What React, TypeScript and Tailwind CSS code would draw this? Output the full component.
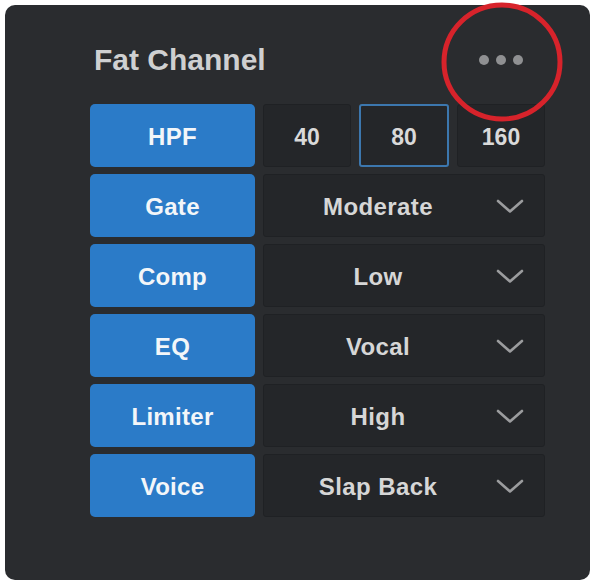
import React from 'react';

const rows = [
  { label: 'Gate', value: 'Moderate' },
  { label: 'Comp', value: 'Low' },
  { label: 'EQ', value: 'Vocal' },
  { label: 'Limiter', value: 'High' },
  { label: 'Voice', value: 'Slap Back' }
];

const hpfOptions = ['40', '80', '160'];

const Chevron = () => (
  <svg width="28" height="15" viewBox="0 0 28 15" fill="none">
    <path d="M2 2 L14 12.5 L26 2" stroke="#9b9c9e" strokeWidth="2.6" strokeLinecap="round" strokeLinejoin="round" />
  </svg>
);

const LabelButton: React.FC<{ label: string }> = ({ label }) => (
  <button className="w-[165px] h-full rounded-[5px] bg-[#2b7bc8] pt-[3px] text-[24px] font-bold text-[#f3f6f9] tracking-[0.3px]">
    {label}
  </button>
);

export default function App() {
  return (
    <div
      className="relative w-[595px] h-[582px] bg-white pt-[5px] pl-[5px]"
      style={{ fontFamily: '"Liberation Sans", Arial, sans-serif' }}
    >
      <div className="w-[585px] h-[575px] rounded-[10px] bg-[#2a2c2f] pt-[40px] pl-[85px] pr-[45px]">
        {/* Header */}
        <div className="flex items-center justify-between h-[29px]">
          <h1 className="pl-[4px] text-[30px] leading-[29px] font-bold text-[#cfd0d1]">Fat Channel</h1>
          <div className="flex items-center gap-[7px] pr-[22px]">
            <span className="w-[10px] h-[10px] rounded-full bg-[#8f9092]" />
            <span className="w-[10px] h-[10px] rounded-full bg-[#8f9092]" />
            <span className="w-[10px] h-[10px] rounded-full bg-[#8f9092]" />
          </div>
        </div>

        {/* Rows */}
        <div className="mt-[30px] flex flex-col gap-[7px]">
          <div className="flex h-[63px] gap-[8px]">
            <LabelButton label="HPF" />
            <div className="flex flex-1 gap-[8px]">
              {hpfOptions.map((opt) => (
                <div
                  key={opt}
                  className={`flex-1 flex items-center justify-center pt-[3px] rounded-[3px] bg-[#242629] text-[23px] font-bold text-[#d9d9d9] ${
                    opt === '80' ? 'border-2 border-[#3c77ae]' : 'border border-[#1f2124]'
                  }`}
                >
                  {opt}
                </div>
              ))}
            </div>
          </div>

          {rows.map((row) => (
            <div key={row.label} className="flex h-[63px] gap-[8px]">
              <LabelButton label={row.label} />
              <div className="flex flex-1 items-center pt-[2px] rounded-[3px] border border-[#1f2124] bg-[#242629]">
                <span className="flex-1 text-center text-[24px] font-bold text-[#d6d6d6] tracking-[0.4px]">
                  {row.value}
                </span>
                <span className="pl-[4px] pr-[20px] flex items-center">
                  <Chevron />
                </span>
              </div>
            </div>
          ))}
        </div>
      </div>

      {/* Red annotation circle */}
      <svg className="absolute left-[440px] top-0" width="130" height="126" viewBox="0 0 130 126" fill="none">
        <ellipse cx="62" cy="62" rx="58" ry="57" stroke="#d7232b" strokeWidth="5" />
      </svg>
    </div>
  );
}
